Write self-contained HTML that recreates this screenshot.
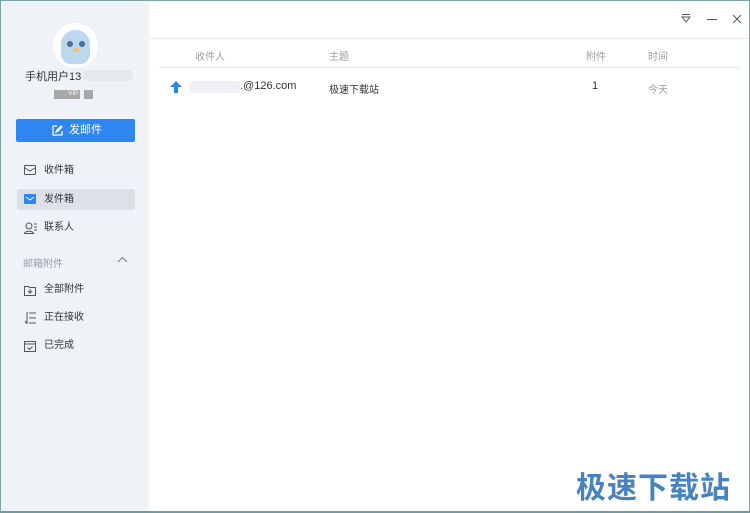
<!DOCTYPE html>
<html><head><meta charset="utf-8"><style>
*{margin:0;padding:0;box-sizing:border-box}
body{width:750px;height:513px;overflow:hidden;background:#fff;font-family:"Liberation Sans","Noto Sans CJK SC",sans-serif;position:relative;}
.frame{position:absolute;inset:0;border:1px solid #7aa4a8;border-bottom:2px solid #6f9aa0;}
.side{position:absolute;left:1px;top:1px;width:148px;height:510px;background:#eff2f7;}
.abs{position:absolute}
.nav{position:absolute;left:16px;width:118px;height:21px;font-size:10px;color:#333;line-height:21px;padding-left:27px}
.nav svg{position:absolute;left:7px;top:5px}
.hd{font-size:10px;color:#9aa0a8}
.t{font-size:11px;color:#333}
</style></head><body>
<div class="side">
  <div class="abs" style="left:52px;top:22px;width:45px;height:45px;border-radius:50%;background:#fff"></div>
  <div class="abs" style="left:60px;top:29px;width:29px;height:34px;border-radius:14px 14px 10px 10px;background:#bcd8ef"></div>
  <div class="abs" style="left:66px;top:40px;width:6px;height:6px;border-radius:50%;background:#4a6f98"></div>
  <div class="abs" style="left:78px;top:40px;width:6px;height:6px;border-radius:50%;background:#4a6f98"></div>
  <div class="abs" style="left:72px;top:47px;width:6px;height:4px;border-radius:2px;background:#f3c46a"></div>
  <div class="abs" style="left:24px;top:67px;font-size:11px;color:#333">手机用户13</div>
  <div class="abs" style="left:82px;top:69px;width:50px;height:11px;background:#e6e8ec;border-radius:4px"></div>
  <div class="abs" style="left:53px;top:89px;width:26px;height:9px;background:#a8a8a8;color:#fff;font-size:6px;line-height:9px;text-align:right;padding-right:2px">VIP</div>
  <div class="abs" style="left:83px;top:89px;width:9px;height:9px;background:#a8a8a8"></div>
  <div class="abs" style="left:15px;top:118px;width:119px;height:23px;background:#2f86f0;border-radius:2px;color:#fff;font-size:11px;line-height:23px;padding-left:53px">发邮件
    <svg class="abs" style="left:36px;top:6px" width="11" height="11" viewBox="0 0 11 11" fill="none" stroke="#fff" stroke-width="1.2"><path d="M5 1H1v9h9V6"/><path d="M4 7l1-2 4-4 1 1-4 4z"/></svg></div>
  <div class="nav" style="top:159px">收件箱<svg width="12" height="10" viewBox="0 0 12 10" fill="none" stroke="#555"><rect x=".5" y=".5" width="11" height="9" rx="1"/><path d="M1 3l5 3 5-3"/></svg></div>
  <div class="nav" style="top:188px;background:#dde1e7;border-radius:2px">发件箱<svg width="12" height="10" viewBox="0 0 12 10"><rect width="12" height="10" rx="1" fill="#2f86f0"/><path d="M2 3l4 3 4-3" stroke="#fff" fill="none"/></svg></div>
  <div class="nav" style="top:216px">联系人<svg width="13" height="12" viewBox="0 0 13 12" fill="none" stroke="#555"><circle cx="5" cy="4" r="3"/><path d="M0.5 11.5c1-3 8-3 9 0zM10 2h3M10 5h3M10 8h3"/></svg></div>
  <div class="abs hd" style="left:22px;top:254px">邮箱附件</div>
  <svg class="abs" style="left:116px;top:255px" width="11" height="7" viewBox="0 0 11 7" fill="none" stroke="#777"><path d="M1 6l4.5-4.5L10 6"/></svg>
  <div class="nav" style="top:278px">全部附件<svg width="12" height="12" viewBox="0 0 12 12" fill="none" stroke="#555"><path d="M.5 2.5h4l1 1h6v8H.5z"/><path d="M6 5v4M4 7l2 2 2-2"/></svg></div>
  <div class="nav" style="top:306px">正在接收<svg width="12" height="12" viewBox="0 0 12 12" fill="none" stroke="#555"><path d="M5 1h7M5 6h7M5 11h7M3 0v12M1 9l2 3"/></svg></div>
  <div class="nav" style="top:334px">已完成<svg width="12" height="12" viewBox="0 0 12 12" fill="none" stroke="#555"><rect x=".5" y="1.5" width="11" height="10"/><path d="M.5 4h11M3.5 7.5l2 2 3-3"/></svg></div>
</div>
<svg class="abs" style="left:681px;top:13px" width="10" height="10" viewBox="0 0 10 10" fill="none" stroke="#555"><path d="M1 1.5h8M1 4l4 5 4-5z"/></svg>
<div class="abs" style="left:707px;top:19px;width:10px;height:1px;background:#555"></div>
<svg class="abs" style="left:732px;top:14px" width="10" height="10" viewBox="0 0 10 10" stroke="#555"><path d="M1 1l8 8M9 1l-8 8"/></svg>
<div class="abs" style="left:150px;top:38px;width:600px;height:1px;background:#e8eaee"></div>
<div class="abs hd" style="left:195px;top:48px">收件人</div>
<div class="abs hd" style="left:329px;top:48px">主题</div>
<div class="abs hd" style="left:586px;top:48px">附件</div>
<div class="abs hd" style="left:648px;top:48px">时间</div>
<div class="abs" style="left:159px;top:67px;width:580px;height:1px;background:#e8eaee"></div>
<svg class="abs" style="left:170px;top:81px" width="12" height="12" viewBox="0 0 12 12"><path d="M6 0l6 6H8v6H4V6H0z" fill="#2f86f0"/></svg>
<div class="abs" style="left:190px;top:81px;width:50px;height:12px;background:#eef0f3;border-radius:3px"></div>
<div class="abs t" style="left:240px;top:80px">.@126.com</div>
<div class="abs t" style="left:329px;top:81px;font-size:10px">极速下载站</div>
<div class="abs t" style="left:592px;top:80px">1</div>
<div class="abs hd" style="left:648px;top:81px">今天</div>
<div class="abs" style="left:576px;top:463px;font-size:30px;font-weight:bold;color:#4a82c0;letter-spacing:1px">极速下载站</div>
<div class="frame"></div>
</body></html>
